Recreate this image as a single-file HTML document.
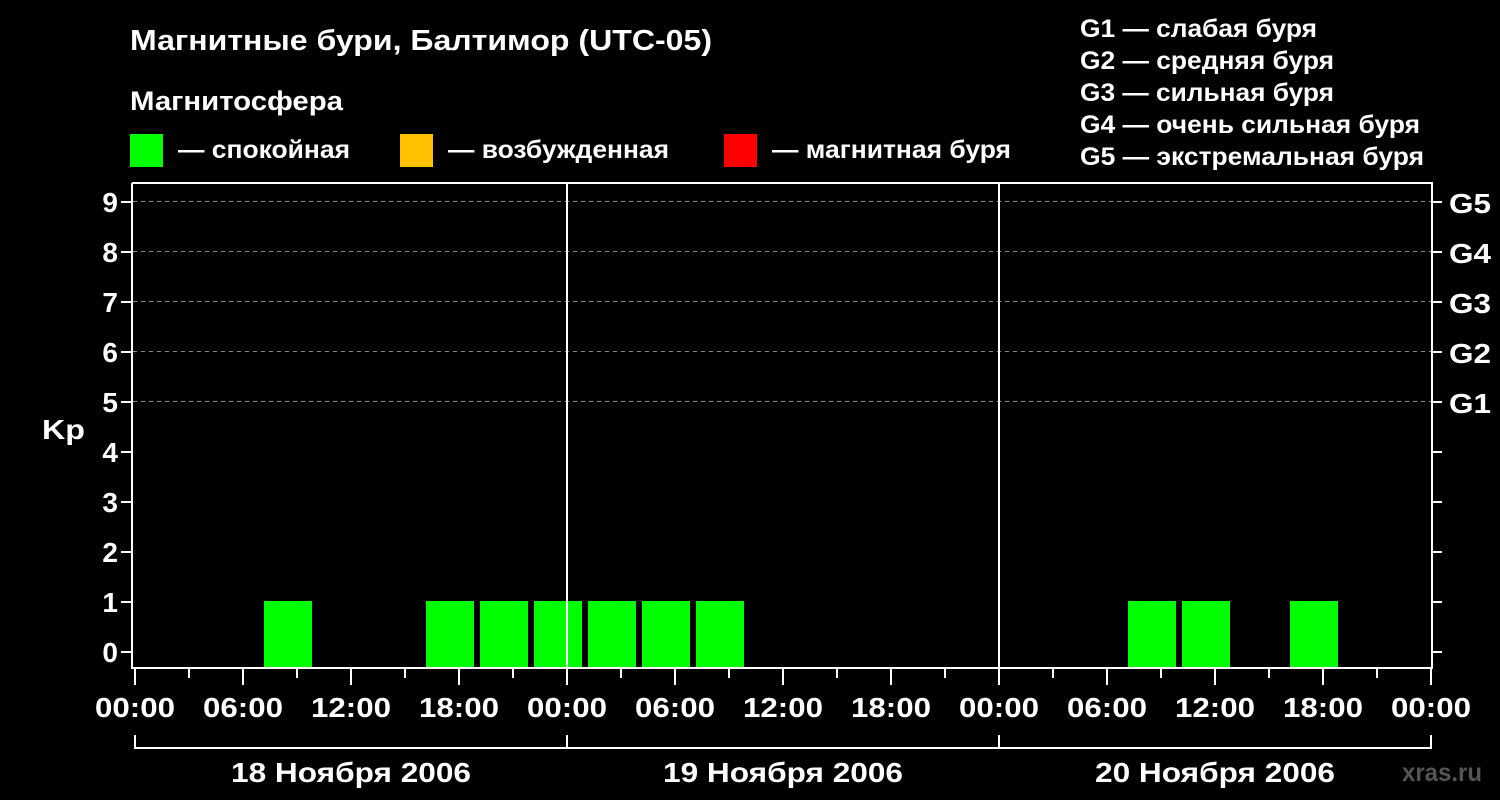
<!DOCTYPE html>
<html><head><meta charset="utf-8"><style>
html,body{margin:0;padding:0;background:#000;}
svg{display:block;}
text{font-family:"Liberation Sans",sans-serif;font-weight:bold;fill:#fff;}
</style></head><body>
<svg width="1500" height="800" xmlns="http://www.w3.org/2000/svg">
<rect width="1500" height="800" fill="#000"/>
<text x="130" y="50" font-size="29" textLength="582" lengthAdjust="spacingAndGlyphs">Магнитные бури, Балтимор (UTC-05)</text>
<text x="130" y="110" font-size="27" textLength="213" lengthAdjust="spacingAndGlyphs">Магнитосфера</text>
<rect x="130" y="134" width="33" height="33" fill="#00ff00"/>
<text x="178" y="158" font-size="25" textLength="172" lengthAdjust="spacingAndGlyphs">— спокойная</text>
<rect x="400" y="134" width="33" height="33" fill="#ffc000"/>
<text x="448" y="158" font-size="25" textLength="221" lengthAdjust="spacingAndGlyphs">— возбужденная</text>
<rect x="724" y="134" width="33" height="33" fill="#ff0000"/>
<text x="772" y="158" font-size="25" textLength="239" lengthAdjust="spacingAndGlyphs">— магнитная буря</text>
<g font-size="25">
<text x="1080" y="37" textLength="237" lengthAdjust="spacingAndGlyphs">G1 — слабая буря</text>
<text x="1080" y="69" textLength="254" lengthAdjust="spacingAndGlyphs">G2 — средняя буря</text>
<text x="1080" y="101" textLength="254" lengthAdjust="spacingAndGlyphs">G3 — сильная буря</text>
<text x="1080" y="133" textLength="340" lengthAdjust="spacingAndGlyphs">G4 — очень сильная буря</text>
<text x="1080" y="165" textLength="344" lengthAdjust="spacingAndGlyphs">G5 — экстремальная буря</text>
</g>
<g stroke="#888" stroke-width="1" stroke-dasharray="4,4">
<line x1="133" y1="201.5" x2="1432" y2="201.5"/>
<line x1="133" y1="251.5" x2="1432" y2="251.5"/>
<line x1="133" y1="301.5" x2="1432" y2="301.5"/>
<line x1="133" y1="351.5" x2="1432" y2="351.5"/>
<line x1="133" y1="401.5" x2="1432" y2="401.5"/>
</g>
<g fill="#00ff00">
<rect x="264" y="601" width="48" height="66"/>
<rect x="426" y="601" width="48" height="66"/>
<rect x="480" y="601" width="48" height="66"/>
<rect x="534" y="601" width="48" height="66"/>
<rect x="588" y="601" width="48" height="66"/>
<rect x="642" y="601" width="48" height="66"/>
<rect x="696" y="601" width="48" height="66"/>
<rect x="1128" y="601" width="48" height="66"/>
<rect x="1182" y="601" width="48" height="66"/>
<rect x="1290" y="601" width="48" height="66"/>
</g>
<g stroke="#fff" stroke-width="2" fill="none">
<polyline points="132,183 132,668 1432,668 1432,183 132,183"/>
<line x1="567" y1="183" x2="567" y2="668"/>
<line x1="999" y1="183" x2="999" y2="668"/>
<polyline points="135,735 135,748 1431,748 1431,735"/>
<line x1="567" y1="735" x2="567" y2="748"/>
<line x1="999" y1="735" x2="999" y2="748"/>
</g>
<g stroke="#fff" stroke-width="2">
<line x1="121" y1="652" x2="131" y2="652"/><line x1="121" y1="602" x2="131" y2="602"/><line x1="121" y1="552" x2="131" y2="552"/><line x1="121" y1="502" x2="131" y2="502"/><line x1="121" y1="452" x2="131" y2="452"/><line x1="121" y1="402" x2="131" y2="402"/><line x1="121" y1="352" x2="131" y2="352"/><line x1="121" y1="302" x2="131" y2="302"/><line x1="121" y1="252" x2="131" y2="252"/><line x1="121" y1="202" x2="131" y2="202"/>
<line x1="1433" y1="652" x2="1442" y2="652"/><line x1="1433" y1="602" x2="1442" y2="602"/><line x1="1433" y1="552" x2="1442" y2="552"/><line x1="1433" y1="502" x2="1442" y2="502"/><line x1="1433" y1="452" x2="1442" y2="452"/><line x1="1433" y1="402" x2="1442" y2="402"/><line x1="1433" y1="352" x2="1442" y2="352"/><line x1="1433" y1="302" x2="1442" y2="302"/><line x1="1433" y1="252" x2="1442" y2="252"/><line x1="1433" y1="202" x2="1442" y2="202"/>
</g>
<g stroke="#fff" stroke-width="2">
<line x1="135" y1="669" x2="135" y2="685"/><line x1="189" y1="669" x2="189" y2="678"/>
<line x1="243" y1="669" x2="243" y2="685"/><line x1="297" y1="669" x2="297" y2="678"/>
<line x1="351" y1="669" x2="351" y2="685"/><line x1="405" y1="669" x2="405" y2="678"/>
<line x1="459" y1="669" x2="459" y2="685"/><line x1="513" y1="669" x2="513" y2="678"/>
<line x1="567" y1="669" x2="567" y2="685"/><line x1="621" y1="669" x2="621" y2="678"/>
<line x1="675" y1="669" x2="675" y2="685"/><line x1="729" y1="669" x2="729" y2="678"/>
<line x1="783" y1="669" x2="783" y2="685"/><line x1="837" y1="669" x2="837" y2="678"/>
<line x1="891" y1="669" x2="891" y2="685"/><line x1="945" y1="669" x2="945" y2="678"/>
<line x1="999" y1="669" x2="999" y2="685"/><line x1="1053" y1="669" x2="1053" y2="678"/>
<line x1="1107" y1="669" x2="1107" y2="685"/><line x1="1161" y1="669" x2="1161" y2="678"/>
<line x1="1215" y1="669" x2="1215" y2="685"/><line x1="1269" y1="669" x2="1269" y2="678"/>
<line x1="1323" y1="669" x2="1323" y2="685"/><line x1="1377" y1="669" x2="1377" y2="678"/>
<line x1="1431" y1="669" x2="1431" y2="685"/>
</g>
<g font-size="28" text-anchor="end">
<text x="118" y="662">0</text><text x="118" y="612">1</text><text x="118" y="562">2</text><text x="118" y="512">3</text><text x="118" y="462">4</text><text x="118" y="412">5</text><text x="118" y="362">6</text><text x="118" y="312">7</text><text x="118" y="262">8</text><text x="118" y="212">9</text>
</g>
<text x="42" y="439" font-size="28" textLength="43" lengthAdjust="spacingAndGlyphs">Kp</text>
<g font-size="28">
<text x="1449" y="213" textLength="42" lengthAdjust="spacingAndGlyphs">G5</text><text x="1449" y="263" textLength="42" lengthAdjust="spacingAndGlyphs">G4</text><text x="1449" y="313" textLength="42" lengthAdjust="spacingAndGlyphs">G3</text><text x="1449" y="363" textLength="42" lengthAdjust="spacingAndGlyphs">G2</text><text x="1449" y="413" textLength="42" lengthAdjust="spacingAndGlyphs">G1</text>
</g>
<g font-size="28">
<text x="95" y="717" textLength="80" lengthAdjust="spacingAndGlyphs">00:00</text>
<text x="203" y="717" textLength="80" lengthAdjust="spacingAndGlyphs">06:00</text>
<text x="311" y="717" textLength="80" lengthAdjust="spacingAndGlyphs">12:00</text>
<text x="419" y="717" textLength="80" lengthAdjust="spacingAndGlyphs">18:00</text>
<text x="527" y="717" textLength="80" lengthAdjust="spacingAndGlyphs">00:00</text>
<text x="635" y="717" textLength="80" lengthAdjust="spacingAndGlyphs">06:00</text>
<text x="743" y="717" textLength="80" lengthAdjust="spacingAndGlyphs">12:00</text>
<text x="851" y="717" textLength="80" lengthAdjust="spacingAndGlyphs">18:00</text>
<text x="959" y="717" textLength="80" lengthAdjust="spacingAndGlyphs">00:00</text>
<text x="1067" y="717" textLength="80" lengthAdjust="spacingAndGlyphs">06:00</text>
<text x="1175" y="717" textLength="80" lengthAdjust="spacingAndGlyphs">12:00</text>
<text x="1283" y="717" textLength="80" lengthAdjust="spacingAndGlyphs">18:00</text>
<text x="1391" y="717" textLength="80" lengthAdjust="spacingAndGlyphs">00:00</text>
<text x="231" y="782" textLength="240" lengthAdjust="spacingAndGlyphs">18 Ноября 2006</text>
<text x="663" y="782" textLength="240" lengthAdjust="spacingAndGlyphs">19 Ноября 2006</text>
<text x="1095" y="782" textLength="240" lengthAdjust="spacingAndGlyphs">20 Ноября 2006</text>
</g>
<text x="1402" y="781" font-size="25" textLength="80" lengthAdjust="spacingAndGlyphs" style="fill:#555">xras.ru</text>
</svg>
</body></html>
